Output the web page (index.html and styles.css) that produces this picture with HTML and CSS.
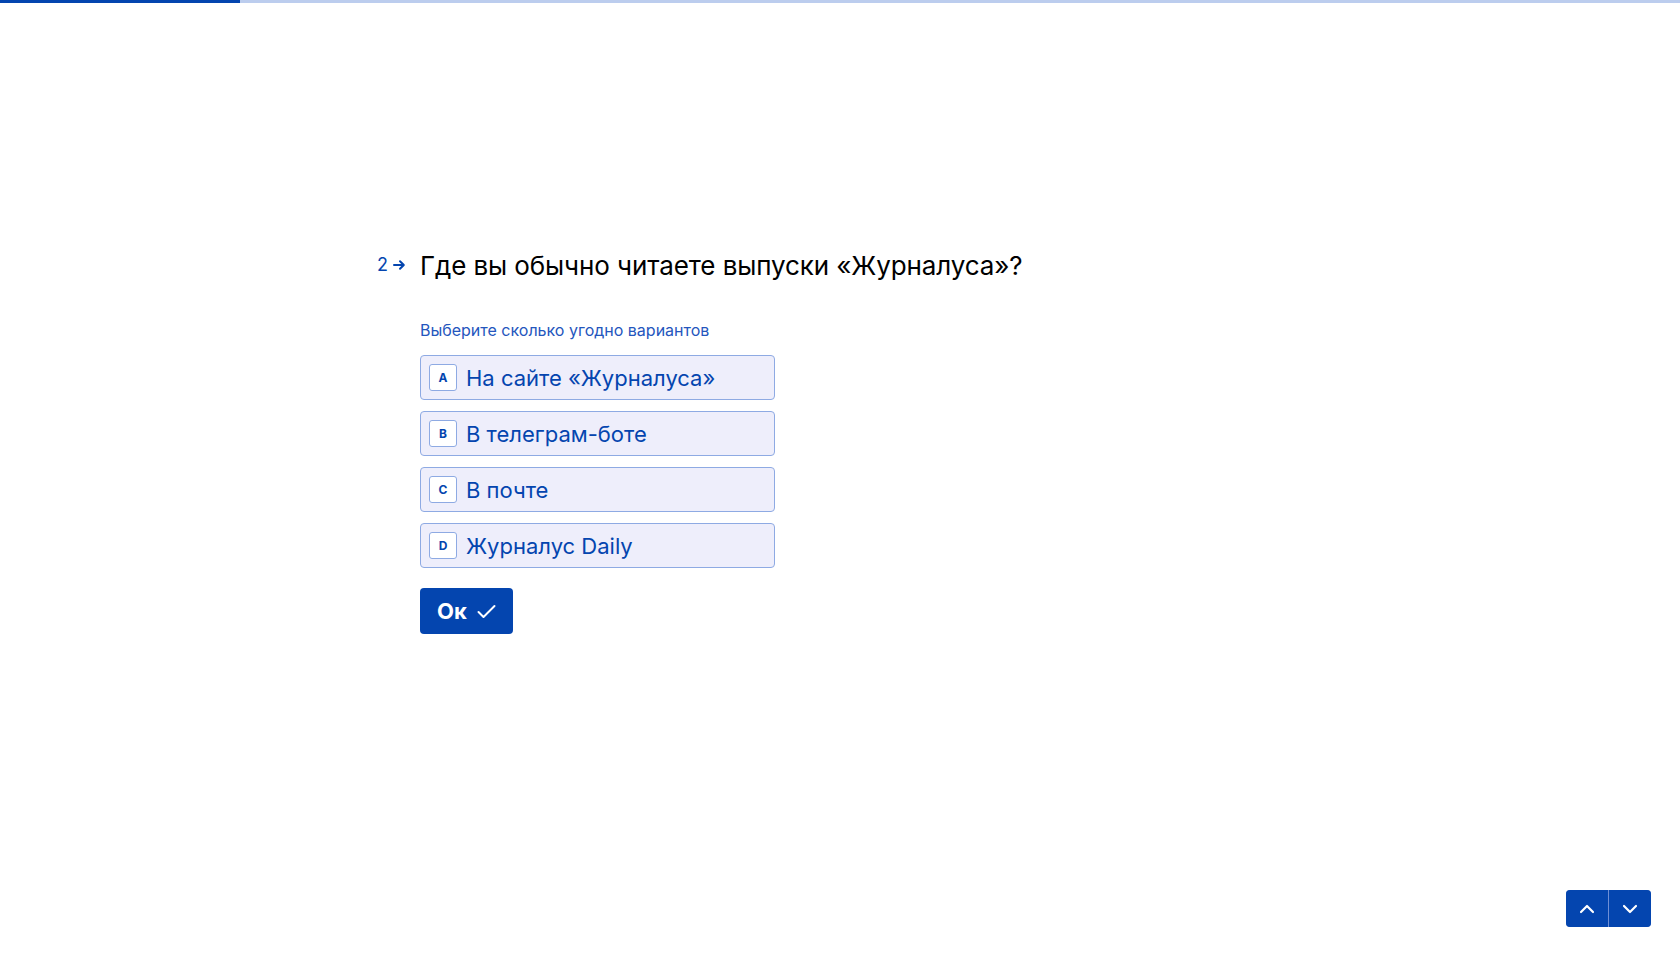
FILE: index.html
```html
<!DOCTYPE html>
<html lang="ru">
<head>
<meta charset="utf-8">
<title>Журналус — опрос</title>
<link rel="stylesheet" href="styles.css">
</head>
<body>
<div class="progress"><div class="progress-fill"></div></div>
<main class="stage">
  <section class="question">
    <div class="qnum">
      <span>2</span>
      <svg class="qarrow" width="13" height="12" viewBox="0 0 13 12"><path d="M1 6h9.5M7 2.2 10.8 6 7 9.8" fill="none" stroke="#0445af" stroke-width="2" stroke-linecap="round" stroke-linejoin="round"/></svg>
    </div>
    <div class="qbody">
      <h1 class="qtitle">Где вы обычно читаете выпуски «Журналуса»?</h1>
      <p class="hint">Выберите сколько угодно вариантов</p>
      <ul class="options">
        <li class="option"><span class="key">A</span><span class="label">На сайте «Журналуса»</span></li>
        <li class="option"><span class="key">B</span><span class="label">В телеграм-боте</span></li>
        <li class="option"><span class="key">C</span><span class="label">В почте</span></li>
        <li class="option"><span class="key">D</span><span class="label">Журналус Daily</span></li>
      </ul>
      <button class="ok">Ок
        <svg width="19" height="15" viewBox="0 0 19 15"><path d="M1.5 8 6.5 13 17.5 2" fill="none" stroke="#fff" stroke-width="2" stroke-linecap="round" stroke-linejoin="round"/></svg>
      </button>
    </div>
  </section>
</main>
<nav class="navbtns">
  <button class="nav"><svg width="16" height="10" viewBox="0 0 16 10"><path d="M2 8 8 2 14 8" fill="none" stroke="#fff" stroke-width="2.2" stroke-linecap="round" stroke-linejoin="round"/></svg></button>
  <button class="nav"><svg width="16" height="10" viewBox="0 0 16 10"><path d="M2 2 8 8 14 2" fill="none" stroke="#fff" stroke-width="2.2" stroke-linecap="round" stroke-linejoin="round"/></svg></button>
</nav>
</body>
</html>
```
FILE: styles.css
```css
* { box-sizing: border-box; }
html, body { margin: 0; padding: 0; }
body {
  width: 1680px;
  height: 956px;
  background: #fff;
  font-family: Inter, "Noto Sans", sans-serif;
  color: #000;
  position: relative;
  overflow: hidden;
}
.progress {
  height: 3px;
  background: #bccdee;
}
.progress-fill {
  width: 240px;
  height: 100%;
  background: #0445af;
}
.stage {
  padding: 247px 0 0 377px;
}
.question {
  display: flex;
  align-items: flex-start;
}
.qnum {
  width: 43px;
  display: flex;
  align-items: center;
  gap: 5px;
  color: #0445af;
  font-size: 18px;
  line-height: 1;
  padding-top: 6px;
}
.qarrow { display: block; }
.qbody { display: flex; flex-direction: column; align-items: flex-start; }
.qtitle {
  margin: 0;
  font-size: 26px;
  font-weight: 400;
  line-height: 32px;
  letter-spacing: -0.1px;
}
.hint {
  margin: 38px 0 0;
  font-size: 16px;
  line-height: 20px;
  color: #2456bd;
}
.options {
  list-style: none;
  margin: 15px 0 0;
  padding: 0;
  display: flex;
  flex-direction: column;
  gap: 11px;
}
.option {
  width: 355px;
  height: 45px;
  display: flex;
  align-items: center;
  gap: 9px;
  padding: 0 8px;
  background: #eeeefb;
  border: 1px solid #8eaae3;
  border-radius: 4px;
  color: #0445af;
}
.key {
  width: 28px;
  height: 27px;
  display: flex;
  align-items: center;
  justify-content: center;
  background: #fff;
  border: 1px solid #8eaae3;
  border-radius: 3px;
  font-size: 12px;
  font-weight: 700;
  color: #0445af;
}
.label {
  font-size: 22px;
  line-height: 28px;
}
.ok {
  margin-top: 20px;
  width: 93px;
  height: 46px;
  display: flex;
  align-items: center;
  gap: 10px;
  padding: 0 0 0 17px;
  background: #0445af;
  color: #fff;
  border: none;
  border-radius: 4px;
  font-family: Inter, "Noto Sans", sans-serif;
  font-size: 22px;
  font-weight: 700;
}
.navbtns {
  position: absolute;
  right: 29px;
  bottom: 29px;
  display: flex;
  gap: 1px;
  background: #6f8fd6;
  border-radius: 4px;
  overflow: hidden;
}
.nav {
  width: 42px;
  height: 37px;
  border: none;
  padding: 0;
  background: #0445af;
  display: flex;
  align-items: center;
  justify-content: center;
}
```
